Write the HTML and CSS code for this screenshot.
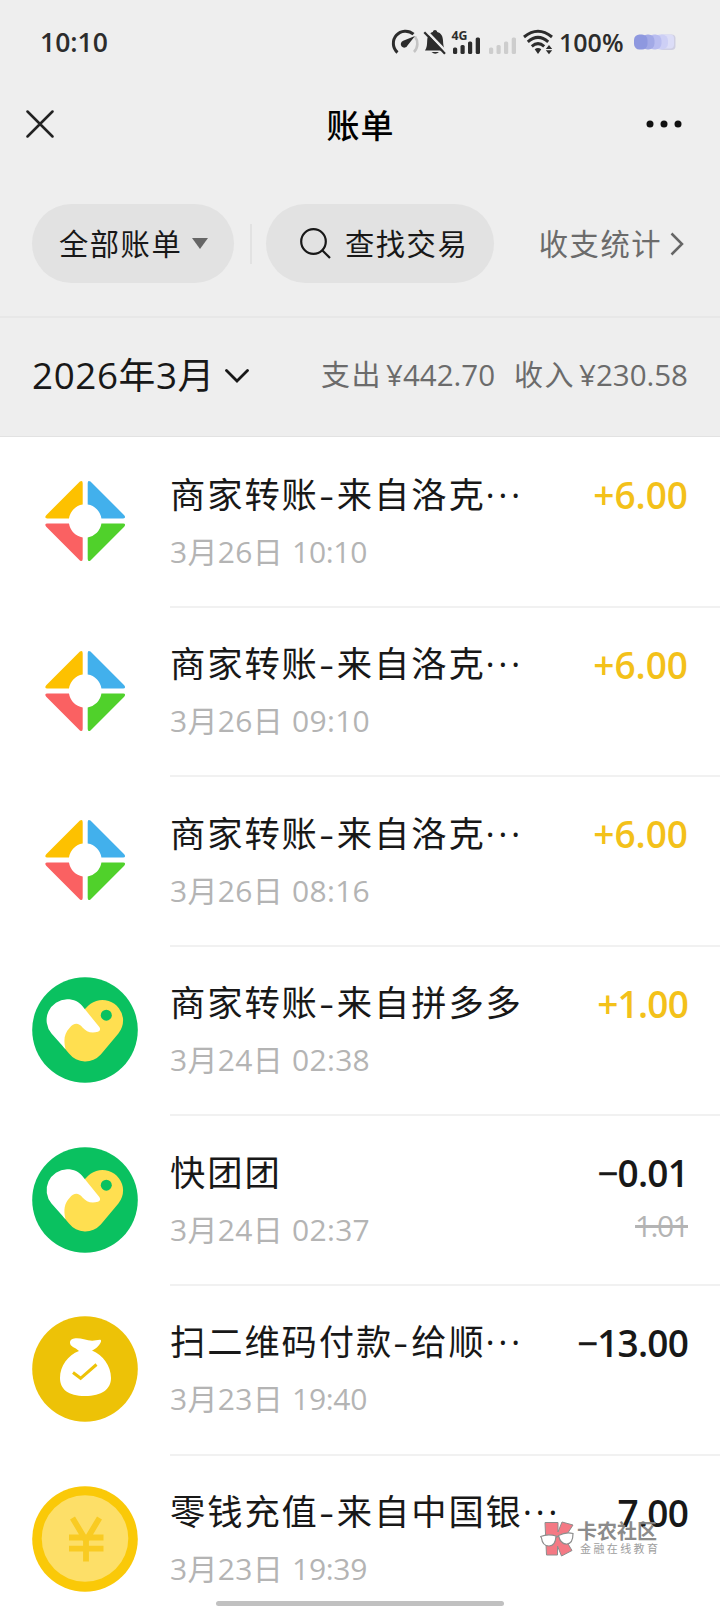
FILE: index.html
```html
<!DOCTYPE html>
<html lang="zh-CN">
<head>
<meta charset="utf-8">
<title>账单</title>
<link rel="stylesheet" href="styles.css">
</head>
<body>
<svg class="defs" aria-hidden="true">
  <symbol id="diamond" viewBox="0 0 106 106">
    <path fill="#fdc100" d="M50.7 36.6V15.2q0-3.4-2.8-1.6L14.2 47.2q-2.2 2.9 1 3.2H37A16.4 16.4 0 0 1 50.7 36.6Z"/>
    <path fill="#42b0ec" transform="translate(106.4 0) scale(-1 1)" d="M50.7 36.6V15.2q0-3.4-2.8-1.6L14.2 47.2q-2.2 2.9 1 3.2H37A16.4 16.4 0 0 1 50.7 36.6Z"/>
    <path fill="#fa6162" transform="translate(0 106) scale(1 -1)" d="M50.7 36.6V15.2q0-3.4-2.8-1.6L14.2 47.2q-2.2 2.9 1 3.2H37A16.4 16.4 0 0 1 50.7 36.6Z"/>
    <path fill="#50d12b" transform="translate(106.4 106) scale(-1 -1)" d="M50.7 36.6V15.2q0-3.4-2.8-1.6L14.2 47.2q-2.2 2.9 1 3.2H37A16.4 16.4 0 0 1 50.7 36.6Z"/>
  </symbol>
  <symbol id="heart" viewBox="0 0 106 106">
    <circle cx="53" cy="53" r="52.8" fill="#0ac160"/>
    <path fill="#ffdf50" d="M54 31A20.8 20.8 0 0 1 91.1 43Q91.1 50.5 86.4 56.5L68.8 77.5A20.8 20.8 0 0 1 37 76.5L31.5 70 29 60 38 46Z"/>
    <path fill="#fff" d="M35 22.3C42 22.3 47 25 50.3 29L67.5 50.3Q69.2 53.3 66 54.8C58.5 57 54.5 54.5 50.5 50.5 46.5 45.5 42 45.5 37.5 51 32.5 56.5 31.2 62.5 33.5 72.2L19.5 56.5A20.8 20.8 0 0 1 35 22.3Z"/>
    <circle cx="74.3" cy="38.2" r="5.5" fill="#0ac160"/>
  </symbol>
  <symbol id="bag" viewBox="0 0 106 106">
    <circle cx="53" cy="53" r="52.8" fill="#edc207"/>
    <path fill="#fff" d="M47 35C36 39 28 50 28 62 28 73 36 80 53 80S79 73 79 62C79 50 71 39 60 34.5 64.5 32.5 68 29 69 25.5 69.5 23 67 23.8 64 24.3 60 25.2 56 24.5 52 23.3 46 21.7 38 21.5 38 26.5 38 31 43 31 47 35Z"/>
    <path fill="none" stroke="#edc207" stroke-width="3" d="M41 56.5 48.6 62.3 64.5 48.5"/>
  </symbol>
  <symbol id="coin" viewBox="0 0 106 106">
    <circle cx="53" cy="53" r="52.8" fill="#fac908"/>
    <circle cx="53" cy="52.5" r="43.3" fill="#fddf68"/>
    <path fill="none" stroke="#f9cb22" stroke-width="5.8" d="M40.5 32 54 54.5 67.5 32M37 51.5H71.5M37 62.7H71.5M54 53V75.5"/>
  </symbol>
</svg>

<header class="top">
  <div class="status">
    <span class="clock">10:10</span>
    <div class="indicators">
      <svg class="ind-gauge" viewBox="0 0 28 26" fill="none">
        <path stroke="#c4c4c4" stroke-width="2.6" d="M24 7.5A12 12 0 0 1 23 23"/>
        <path stroke="#2c2c2c" stroke-width="3" d="M6.5 23.5A12 12 0 0 1 22.5 5.2"/>
        <path fill="#2c2c2c" d="M24 7 16.5 16.5A3.5 3.5 0 1 1 12.2 11.8Z"/>
      </svg>
      <svg class="ind-bell" viewBox="0 0 26 26">
        <path fill="#2c2c2c" d="M3 21.5C5 18.5 5 16 5.2 11.5 5.5 6 8.5 3.5 10.8 3 11 .2 15 .2 15.2 3 19 4 20.8 7 21 11.5 21.2 16 21.5 18 23.2 21.5Z"/>
        <path fill="#2c2c2c" d="M9.5 23H17Q13.2 26.5 9.5 23Z"/>
        <path stroke="#eee" stroke-width="2.6" d="M4.5 2.2 25 23.5"/>
        <path stroke="#2c2c2c" stroke-width="2.2" d="M2.3 3.2 23 24.8"/>
      </svg>
      <svg class="ind-signal" viewBox="0 -5 32 36">
        <text class="net" x="0.5" y="11" textLength="16" lengthAdjust="spacingAndGlyphs">4G</text>
        <g fill="#2c2c2c"><rect x="2" y="18.5" width="4.2" height="6.5" rx="1.5"/><rect x="9.5" y="16" width="4.2" height="9" rx="1.5"/><rect x="17" y="12.5" width="4.2" height="12.5" rx="1.5"/><rect x="24.7" y="8.5" width="4.3" height="16.5" rx="1.5"/></g>
      </svg>
      <svg class="ind-signal2" viewBox="0 0 30 26" fill="#cdcdcd">
        <rect x="1" y="18.5" width="4.2" height="6.5" rx="1.5"/><rect x="8.5" y="16" width="4.2" height="9" rx="1.5"/><rect x="16" y="12.5" width="4.2" height="12.5" rx="1.5"/><rect x="23.7" y="8.5" width="4.3" height="16.5" rx="1.5"/>
      </svg>
      <svg class="ind-wifi" viewBox="0 0 32 26" fill="none" stroke="#2c2c2c" stroke-width="3">
        <path d="M2 8Q16 -3.5 30 8M5.8 12.8Q16 4 26.2 12.8M9.8 17.3Q16 12 22.2 17.3"/>
        <path fill="#2c2c2c" stroke="none" d="M12.7 20.2Q16 17.8 19.3 20.2L16 25ZM23.8 20 27 16 30.2 20ZM23.8 21.3H30.2L27 25.3Z"/>
      </svg>
      <span class="percent">100%</span>
      <svg class="ind-battery" viewBox="0 0 42 18">
        <rect x="25" y="1.5" width="16.5" height="15.5" rx="4" fill="#cfcfe2"/>
        <rect x="25" y="1.5" width="15" height="14" rx="4" fill="#dcddf7"/>
        <rect x="20" y="1.5" width="14" height="15" rx="6" fill="#cdcff5"/>
        <rect x="14" y="1.5" width="13.5" height="15" rx="6" fill="#b9bdf0"/>
        <rect x="7.5" y="1.5" width="13" height="15" rx="6" fill="#a2a9e6"/>
        <rect x="0" y="1.5" width="13.5" height="15" rx="5.5" fill="#8e98df"/>
      </svg>
    </div>
  </div>

  <nav class="nav">
    <svg class="close" viewBox="0 0 28 28"><path d="M1.5 1.5 26.5 26.5M26.5 1.5 1.5 26.5" stroke="#222" stroke-width="2.5" stroke-linecap="round"/></svg>
    <h1>账单</h1>
    <svg class="more" viewBox="0 0 36 8" fill="#111"><circle cx="4" cy="4" r="3.5"/><circle cx="18" cy="4" r="3.5"/><circle cx="32" cy="4" r="3.5"/></svg>
  </nav>

  <div class="filters">
    <div class="pill pill-all">全部账单<svg class="tri" viewBox="0 0 16 11"><path fill="#666" d="M0 0H16L8 11Z"/></svg></div>
    <i class="sep"></i>
    <div class="pill pill-search"><svg class="mag" viewBox="0 0 32 32" fill="none" stroke="#181818" stroke-width="2.2"><circle cx="13.5" cy="13.5" r="12.3"/><path d="M22.2 22.2 30 30"/></svg>查找交易</div>
    <div class="stats">收支统计<svg class="chev" viewBox="0 0 14 24"><path fill="none" stroke="#666" stroke-width="2.5" d="M1.5 1.5 12 12 1.5 22.5"/></svg></div>
  </div>
</header>

<section class="month">
  <div class="month-pick">2026年3月<svg class="down" viewBox="0 0 24 14"><path fill="none" stroke="#181818" stroke-width="2.8" stroke-linecap="round" d="M1.5 1.5 12 12 22.5 1.5"/></svg></div>
  <div class="totals"><span class="lbl">支出</span><span class="num">¥442.70</span><span class="lbl second">收入</span><span class="num">¥230.58</span></div>
</section>

<main class="list">
  <article class="row"><svg class="avatar"><use href="#diamond"/></svg>
    <div class="body"><div class="info"><div class="name">商家转账<b class="dash">-</b>来自洛克<b class="dots">···</b></div><div class="date">3月26日 <span>10:10</span></div></div>
    <div class="money"><div class="amount in">+6.00</div></div></div></article>
  <article class="row"><svg class="avatar"><use href="#diamond"/></svg>
    <div class="body"><div class="info"><div class="name">商家转账<b class="dash">-</b>来自洛克<b class="dots">···</b></div><div class="date">3月26日 09:10</div></div>
    <div class="money"><div class="amount in">+6.00</div></div></div></article>
  <article class="row"><svg class="avatar"><use href="#diamond"/></svg>
    <div class="body"><div class="info"><div class="name">商家转账<b class="dash">-</b>来自洛克<b class="dots">···</b></div><div class="date">3月26日 08:16</div></div>
    <div class="money"><div class="amount in">+6.00</div></div></div></article>
  <article class="row"><svg class="avatar"><use href="#heart"/></svg>
    <div class="body"><div class="info"><div class="name">商家转账<b class="dash">-</b>来自拼多多</div><div class="date">3月24日 02:38</div></div>
    <div class="money"><div class="amount in tight">+1.00</div></div></div></article>
  <article class="row"><svg class="avatar"><use href="#heart"/></svg>
    <div class="body"><div class="info"><div class="name">快团团</div><div class="date">3月24日 02:37</div></div>
    <div class="money"><div class="amount tight">−0.01</div><div class="was">1.01</div></div></div></article>
  <article class="row"><svg class="avatar"><use href="#bag"/></svg>
    <div class="body"><div class="info"><div class="name">扫二维码付款<b class="dash">-</b>给顺<b class="dots">···</b></div><div class="date">3月23日 <span>19:40</span></div></div>
    <div class="money"><div class="amount tight">−13.00</div></div></div></article>
  <article class="row"><svg class="avatar"><use href="#coin"/></svg>
    <div class="body"><div class="info"><div class="name">零钱充值<b class="dash">-</b>来自中国银<b class="dots">···</b></div><div class="date">3月23日 <span>19:39</span></div></div>
    <div class="money"><div class="amount tight">7.00</div></div></div></article>
</main>

<div class="watermark">
  <svg class="wm-logo" viewBox="0 0 34 36">
    <path fill="#f4727e" stroke="#888" stroke-width="1" d="M5 1.5H18V11L22 1 33 4 24.5 17 32 29.5 21.5 35 17.5 25V34H6.5Z"/>
    <path fill="#fff" stroke="#888" stroke-width="1.2" d="M.7 15.5Q8 12.5 16 15 15.5 25 9 25 2.5 25 1.5 17ZM18.5 14.5Q26 10.5 33 12.5 33 22.5 27 23 20.5 23.5 18.5 14.5ZM16 16.5 18.5 15"/>
  </svg>
  <div><div class="wm-name">卡农社区</div><div class="wm-sub">金融在线教育</div></div>
</div>
<div class="home-bar"></div>
</body>
</html>
```
FILE: styles.css
```css
* { box-sizing: border-box; }

body {
  margin: 0;
  width: 720px;
  height: 1608px;
  overflow: hidden;
  position: relative;
  background: #fff;
  color: #181818;
  font-family: "Open Sans", "Noto Sans", "Noto Sans CJK SC", sans-serif;
}

svg { display: block; flex: none; }
.defs { position: absolute; width: 0; height: 0; }

.top, .month { background: #eee; }
.top { height: 318px; border-bottom: 2px solid #e7e7e7; }

.status {
  height: 84px;
  padding: 0 44px 0 40px;
  display: flex;
  justify-content: space-between;
  align-items: center;
  color: #2c2c2c;
}
.clock { font-size: 26.5px; font-weight: 600; line-height: 30px; }
.indicators { display: flex; align-items: center; }
.ind-gauge { width: 28px; height: 26px; }
.ind-bell { width: 26px; height: 26px; margin-left: 3px; }
.ind-signal { width: 32px; height: 36px; margin-left: 3px; }
.ind-signal2 { width: 30px; height: 26px; margin-left: 5px; }
.ind-wifi { width: 32px; height: 26px; margin-left: 4px; }
.net { font-size: 13px; font-weight: 700; fill: #2c2c2c; }
.percent { width: 75px; margin-left: 5px; font-size: 25px; font-weight: 550; line-height: 30px; }
.ind-battery { width: 42px; height: 18px; }

.nav {
  height: 80px;
  padding: 0 38px 0 26px;
  display: flex;
  justify-content: space-between;
  align-items: center;
}
.close { width: 28px; height: 28px; }
.more { width: 36px; height: 8px; }
.nav h1 {
  margin: 3px 0 0 21px;
  font-size: 33px;
  font-weight: 500;
  line-height: 48px;
  letter-spacing: 1px;
  color: #000;
}

.filters {
  padding: 40px 36px 0 32px;
  display: flex;
  align-items: center;
  font-size: 29.3px;
  letter-spacing: 1.5px;
  line-height: 40px;
}
.pill { height: 79px; border-radius: 40px; background: #e2e2e2; display: flex; align-items: center; }
.pill-all { width: 202px; padding-left: 27px; }
.tri { width: 16px; height: 11px; margin-left: 10px; }
.sep { width: 2px; height: 40px; margin: 0 14px 0 16px; background: #e2e2e2; }
.pill-search { width: 228px; padding-left: 34px; }
.mag { width: 32px; height: 32px; margin-right: 13px; }
.stats { margin-left: auto; display: flex; align-items: center; color: #6b6b6b; }
.chev { width: 14px; height: 24px; margin-left: 8px; }

.month {
  height: 119px;
  padding: 0 32px 4px;
  border-bottom: 1px solid #e2e2e2;
  display: flex;
  justify-content: space-between;
  align-items: center;
}
.month-pick { display: flex; align-items: center; font-size: 36.8px; line-height: 50px; letter-spacing: 0.6px; }
.down { width: 24px; height: 14px; margin: 2px 0 0 10px; }
.totals { display: flex; align-items: center; color: #6b6b6b; font-size: 29.5px; line-height: 40px; }
.lbl { margin-right: 4px; font-size: 29px; letter-spacing: 1.5px; }
.second { margin-left: 19px; }

.list { padding-top: 1px; }
.row { height: 169.6px; padding-left: 32px; display: flex; align-items: center; }
.avatar { width: 106px; height: 106px; margin: 0 32px 3px 0; }
.body {
  flex: 1;
  height: 100%;
  padding: 30.5px 32px 0 0;
  display: flex;
  justify-content: space-between;
  border-bottom: 2px solid #f1f1f1;
}
.row:last-child .body { border-bottom: 0; }
.name { font-size: 35.3px; line-height: 50px; letter-spacing: 1.9px; white-space: nowrap; }
.dash, .dots { display: inline-block; font-weight: 400; letter-spacing: 0; text-align: center; }
.dash { width: 18px; padding-right: 2px; transform: scaleX(1.3); }
.dots { width: 38px; letter-spacing: 3.4px; font-family: "Open Sans", sans-serif; }
.date {
  margin-top: 11px;
  font-size: 30px;
  line-height: 44px;
  letter-spacing: 0.3px;
  word-spacing: 1px;
  color: #b4b4b4;
  font-weight: 400;
  white-space: nowrap;
}
.date span { letter-spacing: -0.3px; }
.money { text-align: right; white-space: nowrap; }
.amount { margin-top: 1.5px; font-size: 37px; font-weight: 600; line-height: 50px; }
.tight { letter-spacing: -0.8px; }
.in { color: #f3c11a; }
.was {
  margin-top: 6px;
  font-size: 30px;
  font-weight: 400;
  line-height: 44px;
  letter-spacing: -1.6px;
  color: #b4b4b4;
  text-decoration: line-through;
}

.watermark { position: absolute; left: 540px; top: 1521px; display: flex; opacity: 0.95; }
.wm-logo { width: 34px; height: 36px; margin-right: 3px; }
.wm-name { font-size: 20px; font-weight: 700; line-height: 21px; color: #858585; white-space: nowrap; }
.wm-sub { padding-left: 3px; font-size: 11px; line-height: 14px; letter-spacing: 2.4px; color: #999; white-space: nowrap; }
.home-bar { position: absolute; left: 216px; top: 1601px; width: 288px; height: 5px; border-radius: 3px; background: #c1c1c1; }
```
